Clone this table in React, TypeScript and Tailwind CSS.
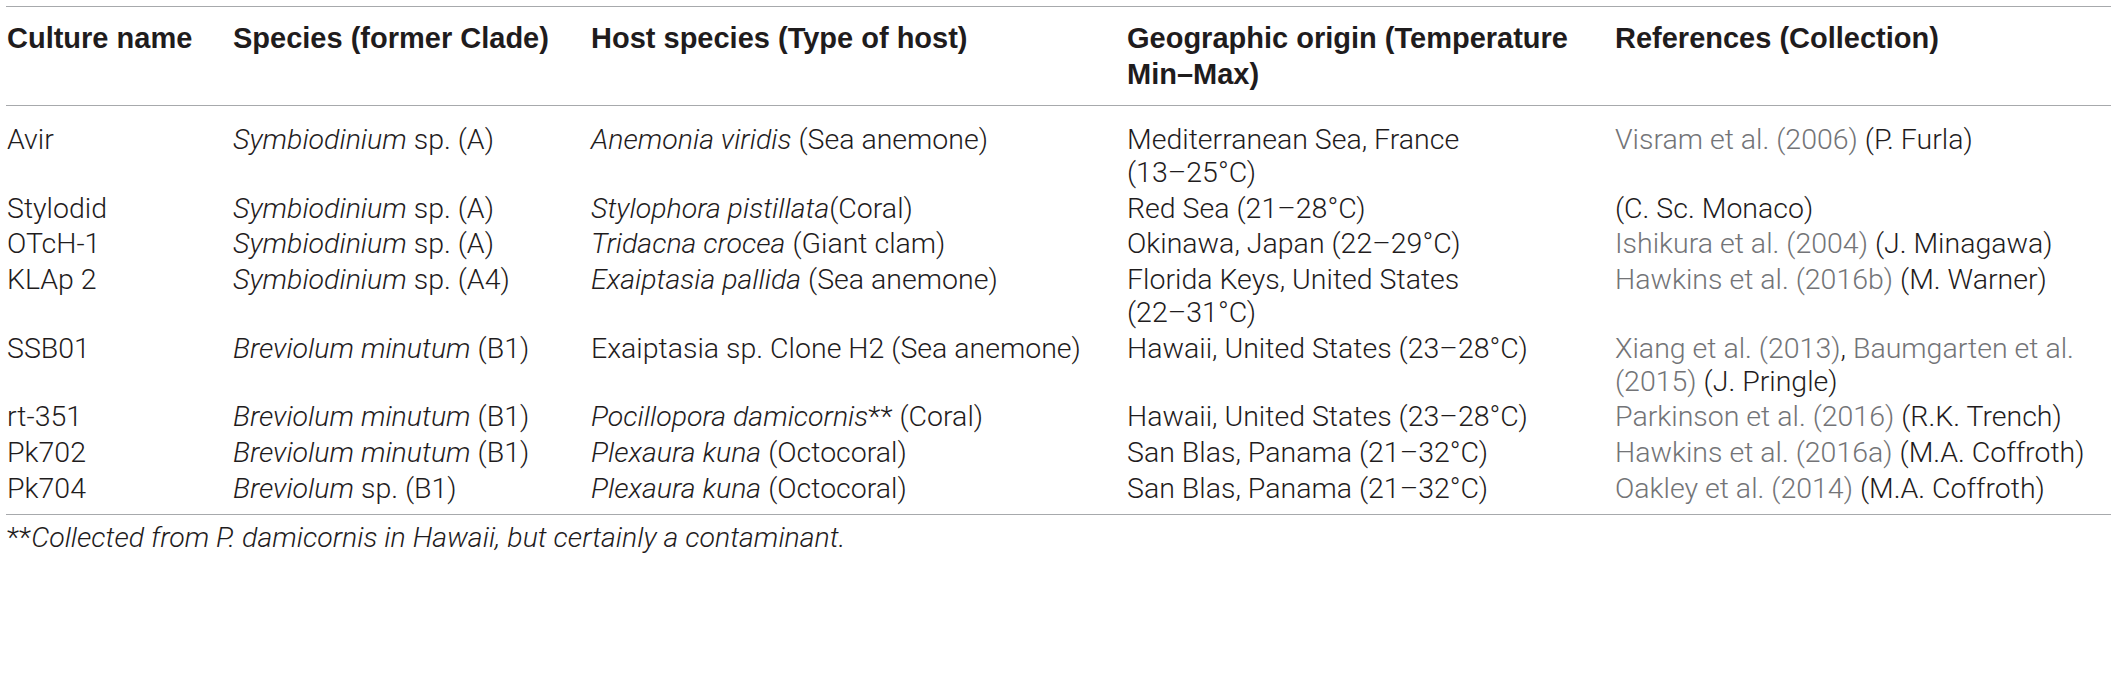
import React from "react"

type Row = {
  culture: string
  species: React.ReactNode
  host: React.ReactNode
  origin: React.ReactNode
  refs: React.ReactNode
}

const Gray = ({ children }: { children: React.ReactNode }) => (
  <span className="text-[#737477]">{children}</span>
)

const rows: Row[] = [
  {
    culture: "Avir",
    species: (
      <>
        <i>Symbiodinium</i> sp. (A)
      </>
    ),
    host: (
      <>
        <i>Anemonia viridis</i> (Sea anemone)
      </>
    ),
    origin: (
      <>
        Mediterranean Sea, France
        <br />
        (13–25°C)
      </>
    ),
    refs: (
      <>
        <Gray>Visram et al. (2006)</Gray> (P. Furla)
      </>
    ),
  },
  {
    culture: "Stylodid",
    species: (
      <>
        <i>Symbiodinium</i> sp. (A)
      </>
    ),
    host: (
      <>
        <i>Stylophora pistillata</i>(Coral)
      </>
    ),
    origin: "Red Sea (21–28°C)",
    refs: "(C. Sc. Monaco)",
  },
  {
    culture: "OTcH-1",
    species: (
      <>
        <i>Symbiodinium</i> sp. (A)
      </>
    ),
    host: (
      <>
        <i>Tridacna crocea</i> (Giant clam)
      </>
    ),
    origin: "Okinawa, Japan (22–29°C)",
    refs: (
      <>
        <Gray>Ishikura et al. (2004)</Gray> (J. Minagawa)
      </>
    ),
  },
  {
    culture: "KLAp 2",
    species: (
      <>
        <i>Symbiodinium</i> sp. (A4)
      </>
    ),
    host: (
      <>
        <i>Exaiptasia pallida</i> (Sea anemone)
      </>
    ),
    origin: (
      <>
        Florida Keys, United States
        <br />
        (22–31°C)
      </>
    ),
    refs: (
      <>
        <Gray>Hawkins et al. (2016b)</Gray> (M. Warner)
      </>
    ),
  },
  {
    culture: "SSB01",
    species: (
      <>
        <i>Breviolum minutum</i> (B1)
      </>
    ),
    host: "Exaiptasia sp. Clone H2 (Sea anemone)",
    origin: "Hawaii, United States (23–28°C)",
    refs: (
      <>
        <Gray>Xiang et al. (2013)</Gray>, <Gray>Baumgarten et al.</Gray>
        <br />
        <Gray>(2015)</Gray> (J. Pringle)
      </>
    ),
  },
  {
    culture: "rt-351",
    species: (
      <>
        <i>Breviolum minutum</i> (B1)
      </>
    ),
    host: (
      <>
        <i>Pocillopora damicornis</i>** (Coral)
      </>
    ),
    origin: "Hawaii, United States (23–28°C)",
    refs: (
      <>
        <Gray>Parkinson et al. (2016)</Gray> (R.K. Trench)
      </>
    ),
  },
  {
    culture: "Pk702",
    species: (
      <>
        <i>Breviolum minutum</i> (B1)
      </>
    ),
    host: (
      <>
        <i>Plexaura kuna</i> (Octocoral)
      </>
    ),
    origin: "San Blas, Panama (21–32°C)",
    refs: (
      <>
        <Gray>Hawkins et al. (2016a)</Gray> (M.A. Coffroth)
      </>
    ),
  },
  {
    culture: "Pk704",
    species: (
      <>
        <i>Breviolum</i> sp. (B1)
      </>
    ),
    host: (
      <>
        <i>Plexaura kuna</i> (Octocoral)
      </>
    ),
    origin: "San Blas, Panama (21–32°C)",
    refs: (
      <>
        <Gray>Oakley et al. (2014)</Gray> (M.A. Coffroth)
      </>
    ),
  },
]

const cols = "grid grid-cols-[227px_358px_536px_488px_497px]"

export default function App() {
  return (
    <div className="h-[686px] w-[2118px] overflow-hidden bg-white pt-[6px] font-['Roboto','Liberation_Sans',Arial,sans-serif] text-[28.5px] leading-[32.8px] font-light text-[#1f1c1d]">
      <div className="ml-[6px] w-[2105px]">
        {/* Header */}
        <div className={`${cols} border-y border-[#a7a9ac] pt-[13px] pb-[13px] font-['Liberation_Sans',Arial,sans-serif] text-[29px] leading-[36px] font-bold`}>
          <div className="pl-[1px] whitespace-nowrap">Culture name</div>
          <div className="whitespace-nowrap">Species (former Clade)</div>
          <div className="whitespace-nowrap">Host species (Type of host)</div>
          <div className="whitespace-nowrap">
            Geographic origin (Temperature
            <br />
            Min–Max)
          </div>
          <div className="whitespace-nowrap">References (Collection)</div>
        </div>

        {/* Body */}
        <div className="border-b border-[#a7a9ac] pt-[16.5px] pb-[7px]">
          {rows.map((r) => (
            <div key={r.culture} className={`${cols} py-[1.5px]`}>
              <div className="pl-[1px] whitespace-nowrap">{r.culture}</div>
              <div className="whitespace-nowrap">{r.species}</div>
              <div className="whitespace-nowrap">{r.host}</div>
              <div className="whitespace-nowrap">{r.origin}</div>
              <div className="whitespace-nowrap">{r.refs}</div>
            </div>
          ))}
        </div>
      </div>

      {/* Footnote */}
      <div className="mt-[7px] pl-[7px] whitespace-nowrap">
        **<i>Collected from P. damicornis in Hawaii, but certainly a contaminant.</i>
      </div>
    </div>
  )
}
